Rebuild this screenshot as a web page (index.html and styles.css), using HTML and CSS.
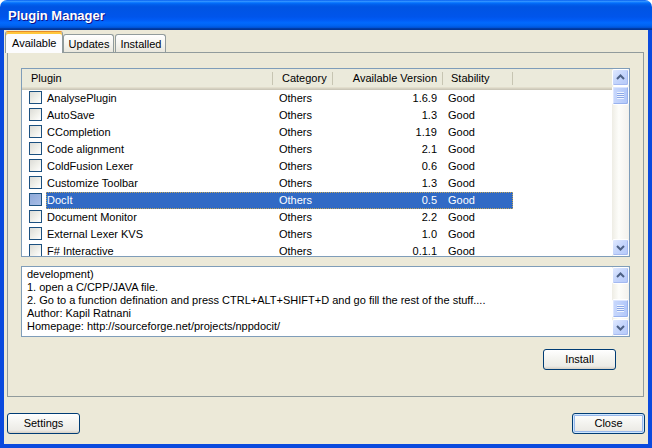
FILE: index.html
```html
<!DOCTYPE html>
<html>
<head>
<meta charset="utf-8">
<title>Plugin Manager</title>
<link rel="stylesheet" href="styles.css">
</head>
<body>
<div class="window">
  <div class="titlebar">Plugin Manager</div>
  <div class="client">
    <div class="tabs">
      <div class="tab active">Available</div>
      <div class="tab">Updates</div>
      <div class="tab tab-gap">Installed</div>
    </div>
    <div class="panel">
      <div class="listbox">
        <div class="lv">
          <div class="lv-header">
            <div class="hc c-plugin">Plugin</div>
            <div class="hc c-cat">Category</div>
            <div class="hc c-ver">Available Version</div>
            <div class="hc c-stab">Stability</div>
          </div>
          <div class="rows">
            <div class="row"><div class="cb-cell"><span class="cb"></span></div><div class="rowbody"><div class="c-name">AnalysePlugin</div><div class="c-cat cell">Others</div><div class="c-ver cell">1.6.9</div><div class="c-stab cell">Good</div></div></div>
            <div class="row"><div class="cb-cell"><span class="cb"></span></div><div class="rowbody"><div class="c-name">AutoSave</div><div class="c-cat cell">Others</div><div class="c-ver cell">1.3</div><div class="c-stab cell">Good</div></div></div>
            <div class="row"><div class="cb-cell"><span class="cb"></span></div><div class="rowbody"><div class="c-name">CCompletion</div><div class="c-cat cell">Others</div><div class="c-ver cell">1.19</div><div class="c-stab cell">Good</div></div></div>
            <div class="row"><div class="cb-cell"><span class="cb"></span></div><div class="rowbody"><div class="c-name">Code alignment</div><div class="c-cat cell">Others</div><div class="c-ver cell">2.1</div><div class="c-stab cell">Good</div></div></div>
            <div class="row"><div class="cb-cell"><span class="cb"></span></div><div class="rowbody"><div class="c-name">ColdFusion Lexer</div><div class="c-cat cell">Others</div><div class="c-ver cell">0.6</div><div class="c-stab cell">Good</div></div></div>
            <div class="row"><div class="cb-cell"><span class="cb"></span></div><div class="rowbody"><div class="c-name">Customize Toolbar</div><div class="c-cat cell">Others</div><div class="c-ver cell">1.3</div><div class="c-stab cell">Good</div></div></div>
            <div class="row selected"><div class="cb-cell"><span class="cb"></span></div><div class="rowbody"><div class="c-name">DocIt</div><div class="c-cat cell">Others</div><div class="c-ver cell">0.5</div><div class="c-stab cell">Good</div></div></div>
            <div class="row"><div class="cb-cell"><span class="cb"></span></div><div class="rowbody"><div class="c-name">Document Monitor</div><div class="c-cat cell">Others</div><div class="c-ver cell">2.2</div><div class="c-stab cell">Good</div></div></div>
            <div class="row"><div class="cb-cell"><span class="cb"></span></div><div class="rowbody"><div class="c-name">External Lexer KVS</div><div class="c-cat cell">Others</div><div class="c-ver cell">1.0</div><div class="c-stab cell">Good</div></div></div>
            <div class="row"><div class="cb-cell"><span class="cb"></span></div><div class="rowbody"><div class="c-name">F# Interactive</div><div class="c-cat cell">Others</div><div class="c-ver cell">0.1.1</div><div class="c-stab cell">Good</div></div></div>
          </div>
        </div>
        <div class="vscroll">
          <div class="sbtn"><svg width="15" height="15" viewBox="0 0 15 15"><path d="M4 9 L7.5 5.5 L11 9" fill="none" stroke="#4d6185" stroke-width="2"/></svg></div>
          <div class="track">
            <div class="thumb"><span class="grip"></span></div>
          </div>
          <div class="sbtn"><svg width="15" height="15" viewBox="0 0 15 15"><path d="M4 6 L7.5 9.5 L11 6" fill="none" stroke="#4d6185" stroke-width="2"/></svg></div>
        </div>
      </div>
      <div class="desc">
        <div class="desc-text">
          <div>development)</div>
          <div>1. open a C/CPP/JAVA file.</div>
          <div>2. Go to a function defination and press CTRL+ALT+SHIFT+D and go fill the rest of the stuff....</div>
          <div>Author: Kapil Ratnani</div>
          <div>Homepage: http://sourceforge.net/projects/nppdocit/</div>
        </div>
        <div class="vscroll">
          <div class="sbtn"><svg width="15" height="15" viewBox="0 0 15 15"><path d="M4 9 L7.5 5.5 L11 9" fill="none" stroke="#4d6185" stroke-width="2"/></svg></div>
          <div class="track">
            <div class="thumb thumb-low"><span class="grip"></span></div>
          </div>
          <div class="sbtn"><svg width="15" height="15" viewBox="0 0 15 15"><path d="M4 6 L7.5 9.5 L11 6" fill="none" stroke="#4d6185" stroke-width="2"/></svg></div>
        </div>
      </div>
      <div class="actions">
        <button class="btn">Install</button>
      </div>
    </div>
    <div class="footer">
      <button class="btn">Settings</button>
      <button class="btn default">Close</button>
    </div>
  </div>
</div>
</body>
</html>
```
FILE: styles.css
```css
html, body {
  margin: 0;
  padding: 0;
}
body {
  width: 652px;
  height: 448px;
  overflow: hidden;
  background: #ffffff;
  font-family: "Liberation Sans", Arial, sans-serif;
  font-size: 11px;
  color: #000;
}
.window {
  width: 652px;
  height: 448px;
  display: flex;
  flex-direction: column;
}
.titlebar {
  height: 30px;
  flex: none;
  box-sizing: border-box;
  border-radius: 7px 7px 0 0;
  padding-left: 8px;
  color: #fff;
  font-family: "Liberation Sans", Arial, sans-serif;
  font-weight: bold;
  font-size: 13px;
  line-height: 31px;
  text-shadow: 1px 1px #0f1089;
  background: linear-gradient(to bottom,
    #0058ee 0%, #3593ff 4%, #288eff 6%, #127dff 8%, #036ffc 10%,
    #0262ee 14%, #0057e5 20%, #0054e3 24%, #0055eb 56%, #005bf5 66%,
    #026afe 76%, #0062ef 86%, #0052d6 92%, #0040ab 94%, #003092 100%);
}
.client {
  flex: 1;
  display: flex;
  flex-direction: column;
  background: #ece9d8;
  border-style: solid;
  border-color: #0a4ade;
  border-width: 0 4px 4px 4px;
  padding-top: 1px;
}

/* Tabs */
.tabs {
  display: flex;
  align-items: flex-end;
  height: 21px;
  padding-left: 1px;
}
.tab {
  height: 18px;
  box-sizing: border-box;
  border: 1px solid #919b9c;
  border-bottom: 0;
  border-radius: 3px 3px 0 0;
  background: linear-gradient(to bottom, #ffffff, #f5f4ef 55%, #e9e7dd);
  padding: 2px 4px 0 4px;
  line-height: 14px;
}
.tab-gap {
  margin-left: 1px;
}
.tab.active {
  height: 22px;
  margin-bottom: -1px;
  position: relative;
  z-index: 1;
  border-top: 1px solid #e68b2c;
  box-shadow: inset 0 2px 0 #ffc73c;
  background: #fcfcfe;
  padding: 4px 6px 0 6px;
}

/* Panel */
.panel {
  margin: 0 4px 0 3px;
  height: 345px;
  box-sizing: border-box;
  border: 1px solid #919b9c;
  background: #ece9d8;
  padding: 15px 13px 0 13px;
  display: flex;
  flex-direction: column;
}
.listbox {
  height: 189px;
  box-sizing: border-box;
  border: 1px solid #7f9db9;
  background: #fff;
  display: flex;
  flex: none;
}
.lv {
  flex: 1;
  overflow: hidden;
  display: flex;
  flex-direction: column;
}
.lv-header {
  display: flex;
  align-items: flex-start;
  height: 21px;
  flex: none;
  background: linear-gradient(to bottom,
    #ebeadb 0, #ebeadb 18px,
    #e2decd 18px, #e2decd 19px,
    #d6d2c2 19px, #d6d2c2 20px,
    #cbc7b8 20px, #cbc7b8 21px);
}
.hc {
  height: 18px;
  box-sizing: border-box;
  line-height: 19px;
  padding: 0 8px 0 9px;
  white-space: nowrap;
  background: linear-gradient(#c7c5b2, #c7c5b2) no-repeat right 0 top 3px / 1px 13px;
}
.c-plugin { width: 251px; }
.c-cat { width: 60px; box-sizing: border-box; }
.c-ver { width: 110px; box-sizing: border-box; }
.c-stab { width: 70px; box-sizing: border-box; }
.hc.c-ver {
  text-align: right;
  padding-right: 6px;
}
.hc.c-stab {
  padding-left: 8px;
}

.rows {
  flex: 1;
  overflow: hidden;
}
.row {
  display: flex;
  height: 17px;
  line-height: 17px;
  white-space: nowrap;
}
.cb-cell {
  width: 24px;
  flex: none;
}
.cb {
  display: block;
  width: 13px;
  height: 13px;
  box-sizing: border-box;
  margin: 1px 0 0 7px;
  border: 1px solid #1c5180;
  background: linear-gradient(135deg, #dcdcd7 0%, #f0f0ea 55%, #ffffff 100%);
}
.rowbody {
  display: flex;
  width: 467px;
  flex: none;
  box-sizing: border-box;
}
.c-name {
  width: 227px;
  box-sizing: border-box;
  padding-left: 1px;
}
.cell.c-cat { padding-left: 6px; }
.cell.c-ver { text-align: right; padding-right: 6px; }
.cell.c-stab { padding-left: 5px; }
.row.selected .rowbody {
  background: #316ac5;
  color: #fff;
  outline: 1px dotted #c4a75a;
  outline-offset: -1px;
}
.row.selected .cb {
  background: linear-gradient(135deg, #8fa9d8 0%, #a7bde6 100%);
}

/* Scrollbars */
.vscroll {
  width: 17px;
  flex: none;
  display: flex;
  flex-direction: column;
  background: linear-gradient(to right, #eeede5, #fdfdfa 40%, #f3f1ec);
}
.sbtn {
  width: 17px;
  height: 17px;
  flex: none;
  box-sizing: border-box;
  border: 1px solid #fff;
  border-radius: 2px;
  background: linear-gradient(135deg, #e0e9fe 0%, #c6d6fc 45%, #b4c8f9 100%);
  box-shadow: inset -1px -1px 0 #a4b9f0;
  display: flex;
  align-items: center;
  justify-content: center;
}
.track {
  flex: 1;
}
.thumb {
  height: 19px;
  box-sizing: border-box;
  border: 1px solid #fff;
  border-radius: 2px;
  background: linear-gradient(to right, #c9d8fc 0%, #bdd0fb 50%, #b0c6f9 100%);
  box-shadow: inset -1px -1px 0 #98b2ee, inset 1px 1px 0 #dbe5fe;
  display: flex;
  align-items: center;
  justify-content: center;
}
.thumb-low {
  margin-top: 15px;
}
.grip {
  display: block;
  width: 7px;
  height: 7px;
  background: repeating-linear-gradient(to bottom, #eef4fe 0, #eef4fe 1px, #8aa6e6 1px, #8aa6e6 2px);
}

/* Description */
.desc {
  margin-top: 9px;
  height: 71px;
  flex: none;
  box-sizing: border-box;
  border: 1px solid #7f9db9;
  background: #fff;
  display: flex;
}
.desc-text {
  flex: 1;
  overflow: hidden;
  padding: 1px 4px 0 5px;
  line-height: 13px;
  white-space: nowrap;
}

.actions {
  display: flex;
  justify-content: flex-end;
  margin-top: 12px;
  padding-right: 14px;
}

/* Buttons */
.btn {
  width: 73px;
  height: 21px;
  box-sizing: border-box;
  padding: 0;
  border: 1px solid #003c74;
  border-radius: 3px;
  background: linear-gradient(to bottom, #ffffff 0%, #f4f4f0 45%, #ecebe6 85%, #d6d0c5 100%);
  font-family: "Liberation Sans", Arial, sans-serif;
  font-size: 11px;
  color: #000;
  line-height: 19px;
}
.btn.default {
  box-shadow: inset 0 0 0 1px #cee7ff, inset 0 0 0 2px #98b8ea;
}

.footer {
  display: flex;
  justify-content: space-between;
  margin-top: 16px;
  padding: 0 3px;
}
```
